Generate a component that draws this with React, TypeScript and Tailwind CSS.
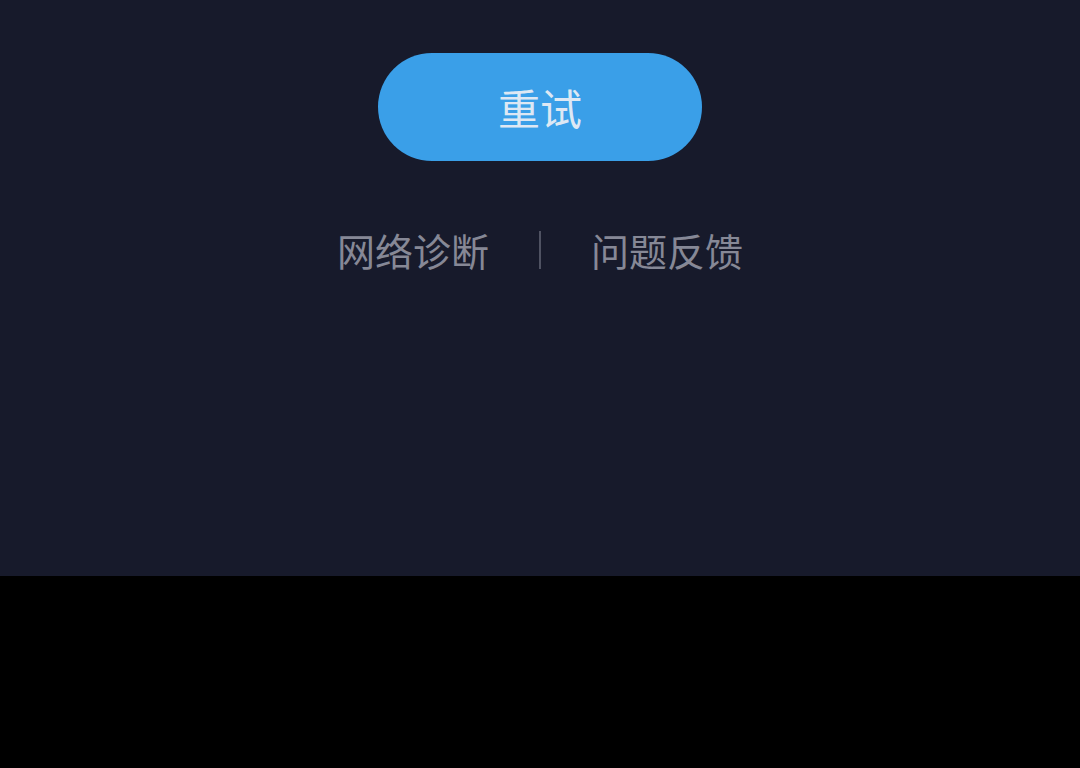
import React from "react";

export default function App() {
  const font = { fontFamily: '"Noto Sans CJK SC", "Noto Sans", sans-serif' };
  return (
    <div className="w-[1080px] h-[768px] bg-black flex flex-col" style={font}>
      <div className="h-[576px] bg-[#171a2b] flex flex-col items-center pt-[53px]">
        <button className="w-[324px] h-[108px] rounded-full bg-[#3a9fe8] text-[#dde8f4] text-[42px] leading-none flex items-center justify-center">
          重试
        </button>
        <div className="mt-[70px] flex items-center text-[38px] leading-none text-[#868896]">
          <span>网络诊断</span>
          <span className="mx-[50px] w-[2px] h-[38px] bg-[#4f5262]" />
          <span>问题反馈</span>
        </div>
      </div>
    </div>
  );
}
